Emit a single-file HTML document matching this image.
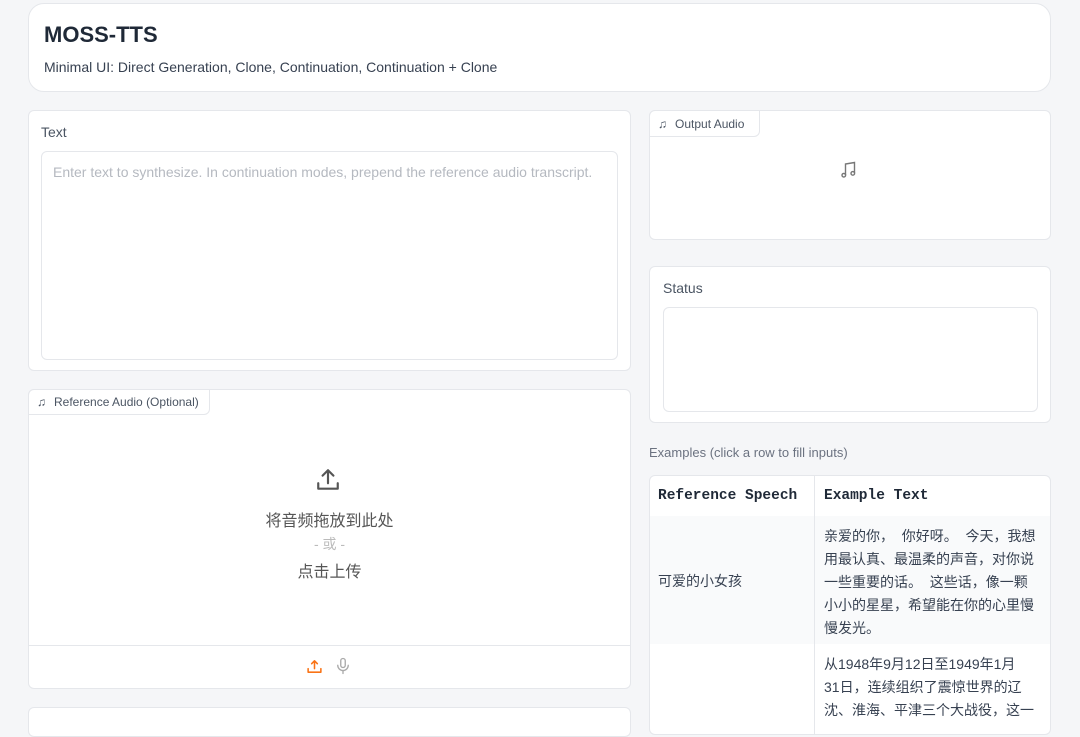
<!DOCTYPE html>
<html><head><meta charset="utf-8"><style>
*{box-sizing:border-box;margin:0;padding:0}
body{width:1080px;height:718px;overflow:hidden;background:#f5f6f8;font-family:"Liberation Sans","Noto Sans CJK SC",sans-serif;color:#374151;position:relative}
.card{position:absolute;background:#fff;border:1px solid #e5e7eb;border-radius:6px}
.abs{position:absolute}
.tab{position:absolute;left:-1px;top:-1px;border:1px solid #e5e7eb;border-radius:6px 0 6px 0;background:#fff;font-size:12px;color:#4b5563;display:flex;align-items:center;gap:8px;padding:0 8px}
.cjk{font-family:"Liberation Sans","Noto Sans CJK SC",sans-serif}
</style></head><body>
<div class="card" style="left:28px;top:3px;width:1023px;height:89px;border-radius:16px">
 <div class="abs" style="left:15px;top:18px;font-size:22px;font-weight:bold;color:#1f2937">MOSS-TTS</div>
 <div class="abs" style="left:15px;top:55px;font-size:14px;color:#374151">Minimal UI: Direct Generation, Clone, Continuation, Continuation + Clone</div>
</div>

<div class="card" style="left:28px;top:110px;width:603px;height:261px">
 <div class="abs" style="left:12px;top:13px;font-size:14px;color:#4b5563">Text</div>
 <div class="abs" style="left:12px;top:40px;width:577px;height:209px;border:1px solid #e5e7eb;border-radius:6px">
  <div class="abs" style="left:11px;top:12px;font-size:14px;color:#b5b9c0;white-space:nowrap">Enter text to synthesize. In continuation modes, prepend the reference audio transcript.</div>
 </div>
</div>

<div class="card" style="left:28px;top:389px;width:603px;height:300px">
 <div class="tab" style="width:182px;height:26px">♫ <span>Reference Audio (Optional)</span></div>
 <svg class="abs" style="left:286px;top:77px" width="26" height="26" viewBox="0 0 24 24" fill="none" stroke="#555" stroke-width="2" stroke-linecap="round" stroke-linejoin="round"><path d="M12 15V3M7 8l5-5 5 5M3 15v5h18v-5"/></svg>
 <div class="abs cjk" style="left:0;width:601px;top:117px;text-align:center;font-size:16px;color:#555">将音频拖放到此处</div>
 <div class="abs cjk" style="left:0;width:601px;top:144px;text-align:center;font-size:14px;color:#bbb">- 或 -</div>
 <div class="abs cjk" style="left:0;width:601px;top:168px;text-align:center;font-size:16px;color:#555">点击上传</div>
 <div class="abs" style="left:0;top:255px;width:601px;border-top:1px solid #e5e7eb"></div>
 <svg class="abs" style="left:277px;top:268px" width="17" height="17" viewBox="0 0 24 24" fill="none" stroke="#f97316" stroke-width="2.2" stroke-linecap="round" stroke-linejoin="round"><path d="M12 15V4M8 8l4-4 4 4M3 15v5h18v-5"/></svg>
 <svg class="abs" style="left:305px;top:266px" width="18" height="20" viewBox="0 0 24 24" fill="none" stroke="#aaa" stroke-width="1.8" stroke-linecap="round"><rect x="9" y="2" width="6" height="12" rx="3"/><path d="M5 11a7 7 0 0 0 14 0M12 18v4"/></svg>
</div>
<div class="card" style="left:28px;top:707px;width:603px;height:30px"></div>

<div class="card" style="left:649px;top:110px;width:402px;height:130px">
 <div class="tab" style="width:111px;height:27px">♫ <span>Output Audio</span></div>
 <svg class="abs" style="left:190px;top:49px" width="20" height="20" viewBox="0 0 20 20" fill="none" stroke="#777" stroke-width="1.4"><path d="M5.5 15V4l9-1.5V13"/><circle cx="3.8" cy="15.2" r="1.8"/><circle cx="12.8" cy="13.4" r="1.8"/></svg>
</div>

<div class="card" style="left:649px;top:266px;width:402px;height:157px">
 <div class="abs" style="left:13px;top:13px;font-size:14px;color:#4b5563">Status</div>
 <div class="abs" style="left:13px;top:40px;width:375px;height:105px;border:1px solid #e5e7eb;border-radius:6px"></div>
</div>

<div class="abs" style="left:649px;top:445px;font-size:13px;color:#6b7280">Examples (click a row to fill inputs)</div>

<div class="card" style="left:649px;top:475px;width:402px;height:260px;overflow:hidden">
 <div class="abs" style="left:0;top:40px;width:402px;height:128px;background:#f9fafb"></div>
 <div class="abs" style="left:164px;top:0;height:260px;border-left:1px solid #e5e7eb"></div>
 <div class="abs" style="left:8px;top:12px;font-family:'Liberation Mono',monospace;font-weight:bold;font-size:14.5px;color:#1f2937">Reference Speech</div>
 <div class="abs" style="left:174px;top:12px;font-family:'Liberation Mono',monospace;font-weight:bold;font-size:14.5px;color:#1f2937">Example Text</div>
 <div class="abs cjk" style="left:8px;top:95px;font-size:14px;color:#374151">可爱的小女孩</div>
 <div class="abs cjk" style="left:174px;top:49px;width:220px;font-size:14px;line-height:23px;color:#374151">亲爱的你，&nbsp; 你好呀。&nbsp; 今天，我想<br>用最认真、最温柔的声音，对你说<br>一些重要的话。&nbsp; 这些话，像一颗<br>小小的星星，希望能在你的心里慢<br>慢发光。</div>
 <div class="abs cjk" style="left:174px;top:177px;width:220px;font-size:14px;line-height:23px;color:#374151">从1948年9月12日至1949年1月<br>31日，连续组织了震惊世界的辽<br>沈、淮海、平津三个大战役，这一</div>
</div>
</body></html>
